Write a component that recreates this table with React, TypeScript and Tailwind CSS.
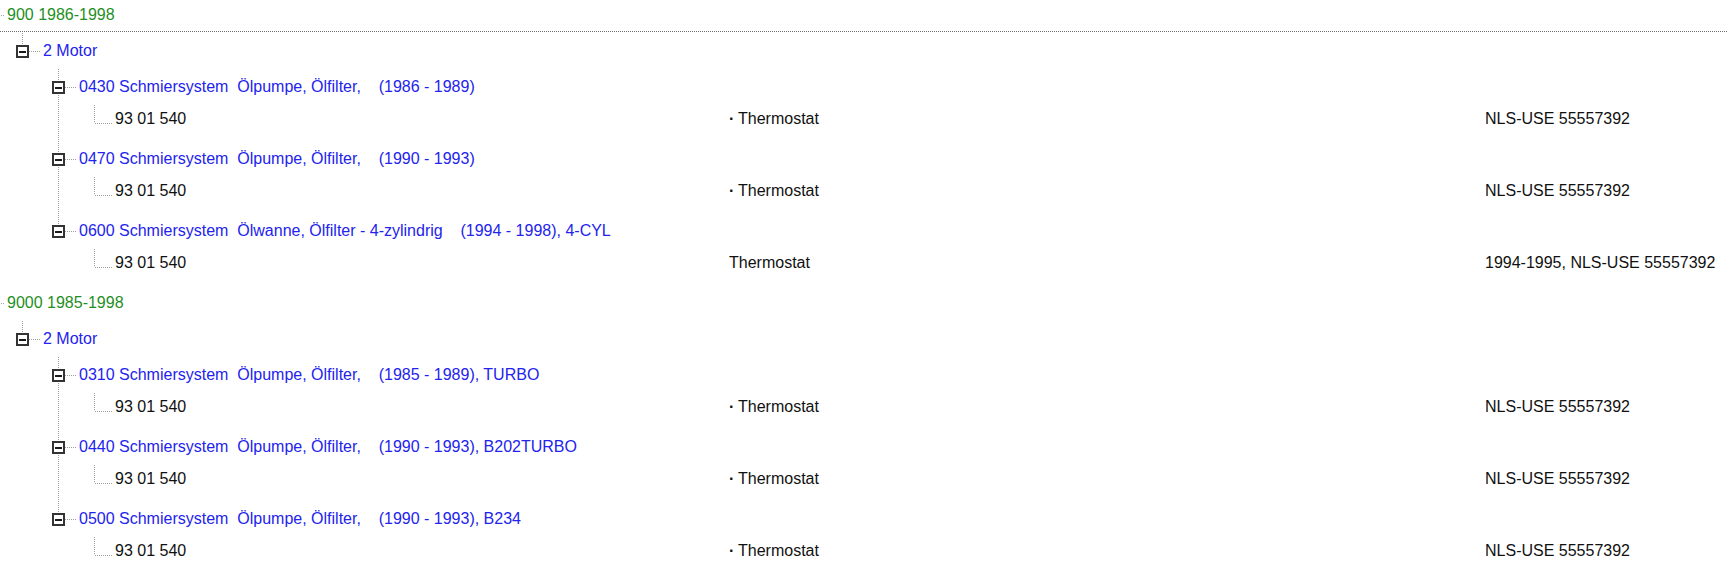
import React from 'react';

type Leaf = { part: string; desc: string; bullet: boolean; note: string };
type Group = { title: string; leaf: Leaf };
type Model = { name: string; section: string; groups: Group[] };

const GREEN = 'text-[#1f8f1f]';
const BLUE = 'text-[#2323ee]';
const BLACK = 'text-[#111]';

const lineV = 'bg-[repeating-linear-gradient(180deg,#a0a0a0_0_1px,transparent_1px_2px)]';
const lineH = 'bg-[repeating-linear-gradient(90deg,#a0a0a0_0_1px,transparent_1px_2px)]';

const std: Leaf = { part: '93 01 540', desc: 'Thermostat', bullet: true, note: 'NLS-USE 55557392' };

const models: Model[] = [
  {
    name: '900 1986-1998',
    section: '2 Motor',
    groups: [
      { title: '0430 Schmiersystem  Ölpumpe, Ölfilter,    (1986 - 1989)', leaf: std },
      { title: '0470 Schmiersystem  Ölpumpe, Ölfilter,    (1990 - 1993)', leaf: std },
      {
        title: '0600 Schmiersystem  Ölwanne, Ölfilter - 4-zylindrig    (1994 - 1998), 4-CYL',
        leaf: { part: '93 01 540', desc: 'Thermostat', bullet: false, note: '1994-1995, NLS-USE 55557392' },
      },
    ],
  },
  {
    name: '9000 1985-1998',
    section: '2 Motor',
    groups: [
      { title: '0310 Schmiersystem  Ölpumpe, Ölfilter,    (1985 - 1989), TURBO', leaf: std },
      { title: '0440 Schmiersystem  Ölpumpe, Ölfilter,    (1990 - 1993), B202TURBO', leaf: std },
      { title: '0500 Schmiersystem  Ölpumpe, Ölfilter,    (1990 - 1993), B234', leaf: std },
    ],
  },
];

type Row = {
  guides: boolean[];
  up: boolean;
  down: boolean;
  box: boolean;
  text: string;
  color: string;
  leaf?: Leaf;
  focus?: boolean;
};

function buildRows(): Row[] {
  const rows: Row[] = [];
  models.forEach((m, mi) => {
    const rootNext = mi < models.length - 1;
    rows.push({ guides: [], up: mi > 0, down: rootNext, box: true, text: m.name, color: GREEN, focus: mi === 0 });
    rows.push({ guides: [rootNext], up: true, down: false, box: true, text: m.section, color: BLUE });
    m.groups.forEach((g, gi) => {
      const next = gi < m.groups.length - 1;
      rows.push({ guides: [rootNext, false], up: true, down: next, box: true, text: g.title, color: BLUE });
      rows.push({ guides: [rootNext, false, next], up: true, down: false, box: false, text: g.leaf.part, color: BLACK, leaf: g.leaf });
    });
  });
  return rows;
}

function Cell({ up, down, box }: { up: boolean; down: boolean; box: boolean }) {
  return (
    <div className="relative h-full w-9 shrink-0">
      {up && <span className={`absolute left-[17px] top-0 h-[18px] w-px ${lineV}`} />}
      {down && <span className={`absolute bottom-0 left-[17px] top-[18px] w-px ${lineV}`} />}
      <span className={`absolute left-[18px] right-0 top-[18px] h-px ${lineH}`} />
      {box && (
        <span className="absolute left-[11px] top-[12px] flex h-[13px] w-[13px] items-center justify-center border-2 border-[#333] bg-white">
          <span className="h-[2px] w-[7px] bg-[#1a1a1a]" />
        </span>
      )}
    </div>
  );
}

function TreeRow({ row }: { row: Row }) {
  const shift = row.leaf ? 'mb-[9px]' : '';
  return (
    <div className="relative flex h-9 items-center">
      <div className="flex h-full w-[760px] shrink-0 items-center">
        {row.guides.map((g, i) => (
          <div key={i} className="relative h-full w-9 shrink-0">
            {g && <span className={`absolute inset-y-0 left-[17px] w-px ${lineV}`} />}
          </div>
        ))}
        <Cell up={row.up} down={row.down} box={row.box} />
        <span className={`ml-[2px] whitespace-pre ${row.color} ${shift}`}>{row.text}</span>
      </div>
      {row.leaf && (
        <>
          <div className={`w-[756px] shrink-0 whitespace-pre ${BLACK} ${shift}`}>
            {row.leaf.bullet && <span className="inline-block w-[9px] font-bold">·</span>}
            {row.leaf.desc}
          </div>
          <div className={`whitespace-pre ${BLACK} ${shift}`}>{row.leaf.note}</div>
        </>
      )}
      {row.focus && (
        <span className="absolute bottom-px left-[31px] right-0 h-px bg-[repeating-linear-gradient(90deg,#6e6e6e_0_1px,transparent_1px_2px)]" />
      )}
    </div>
  );
}

export default function App() {
  const rows = buildRows();
  return (
    <div className="h-[573px] w-full overflow-hidden bg-white font-['Liberation_Sans',Arial,sans-serif] text-[16px] leading-[18px]">
      <div className="-ml-[31px] -mt-[3px]">
        {rows.map((r, i) => (
          <TreeRow key={i} row={r} />
        ))}
      </div>
    </div>
  );
}
